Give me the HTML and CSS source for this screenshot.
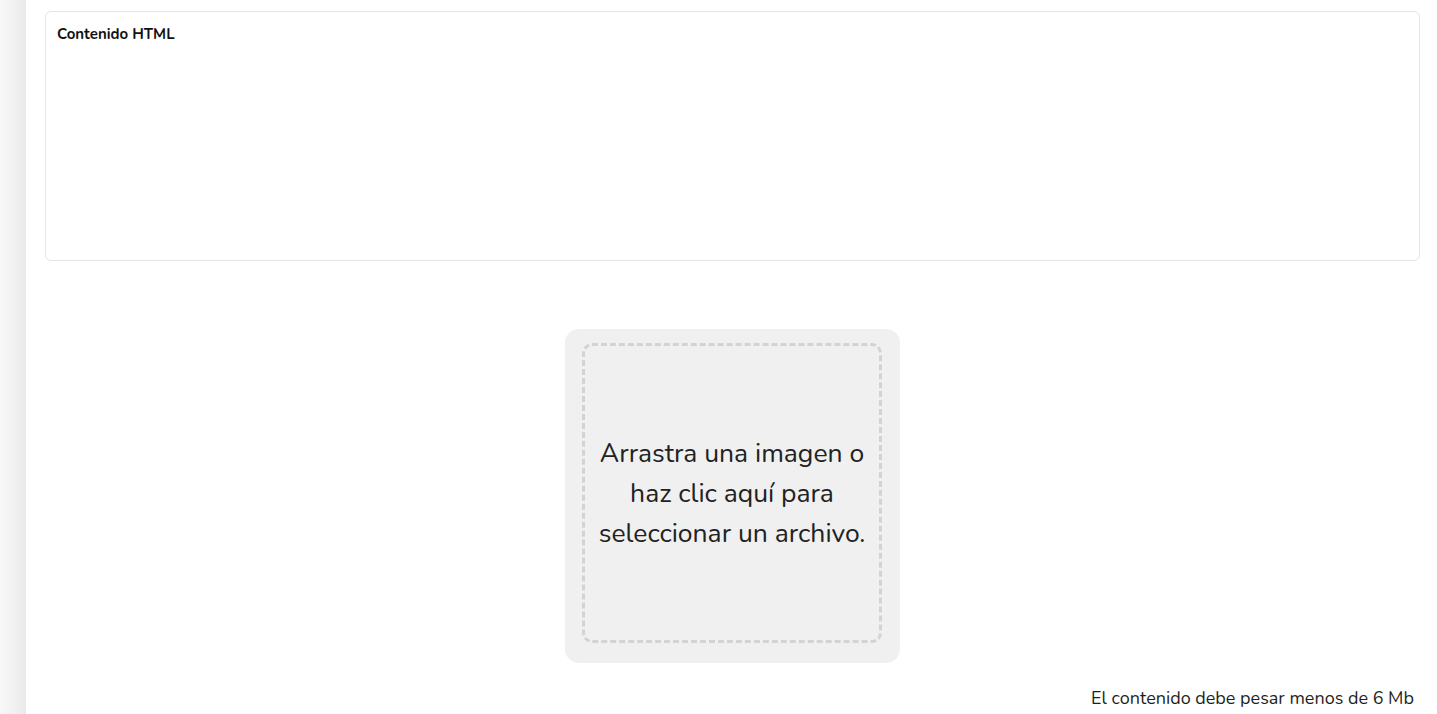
FILE: index.html
```html
<!DOCTYPE html>
<html lang="es">
<head>
    <meta charset="UTF-8">
    <meta name="viewport" content="width=device-width, initial-scale=1.0">
    <title>Contenido</title>
    <link rel="stylesheet" href="styles.css">
</head>
<body>
    <div class="layout">
        <div class="side-shadow"></div>
        <main class="content">
            <div class="html-card">
                <label class="card-label">Contenido HTML</label>
            </div>

            <div class="upload-wrap">
                <div class="dropzone">
                    <div class="dropzone-inner">
                        <p>Arrastra una imagen o haz clic aquí para seleccionar un archivo.</p>
                    </div>
                </div>
            </div>

            <p class="size-note">El contenido debe pesar menos de 6 Mb</p>
        </main>
    </div>
</body>
</html>
```

FILE: styles.css
```css
body {
    font-family: 'Nunito', 'Open Sans', sans-serif;
    margin: 0;
    padding: 0;
    background: #fff;
    color: #1f1f1f;
    height: 100vh;
    overflow: hidden;
}
.layout {
    display: flex;
    height: 100%;
}
.side-shadow {
    width: 26px;
    flex-shrink: 0;
    background: linear-gradient(to right, #f8f8f8, #eaeaea);
}
.content {
    flex: 1;
    padding: 11px 17px 0 19px;
    display: flex;
    flex-direction: column;
}
.html-card {
    height: 250px;
    box-sizing: border-box;
    border: 1px solid #e6e6e6;
    border-radius: 6px;
    padding: 12px 11px;
}
.card-label {
    display: block;
    font-size: 15px;
    font-weight: 700;
    color: #111;
}

/* Drop zone */
.upload-wrap {
    display: flex;
    justify-content: center;
    margin-top: 68px;
}
.dropzone {
    background: #f0f0f0;
    border-radius: 14px;
    padding: 14px 18px 20px 17px;
}
.dropzone-inner {
    width: 300px;
    height: 300px;
    box-sizing: border-box;
    border: 3px dashed #d3d3d3;
    border-radius: 10px;
    display: flex;
    align-items: center;
    justify-content: center;
    text-align: center;
    padding: 0 6px;
}
.dropzone-inner p {
    margin: 0;
    font-size: 26.5px;
    line-height: 40px;
    color: #222;
}
.size-note {
    margin: 23px 6px 0 0;
    text-align: right;
    font-size: 18px;
    color: #1f1f1f;
}
```
